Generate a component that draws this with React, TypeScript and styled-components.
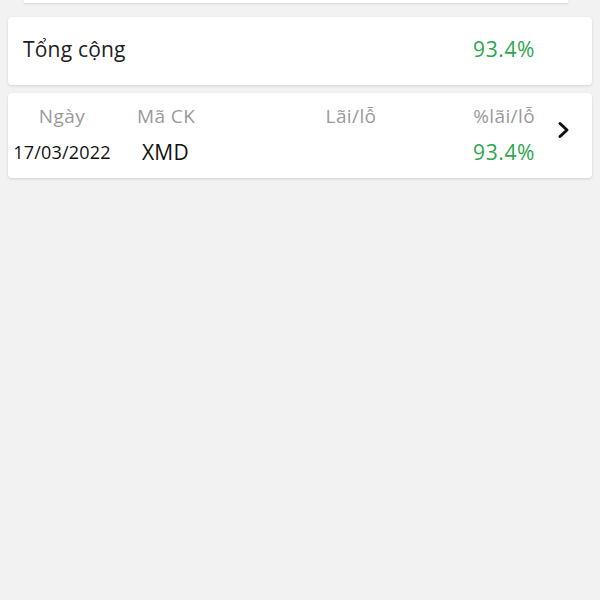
import React from "react";
import styled, { createGlobalStyle } from "styled-components";

const Global = createGlobalStyle`
  html, body { margin: 0; padding: 0; background: #f2f2f2; }
  body { font-family: "Open Sans", "Noto Sans", sans-serif; }
`;

const Page = styled.div`
  width: 600px;
  height: 600px;
  background: #f2f2f2;
  display: flex;
  flex-direction: column;
  overflow: hidden;
`;

const TopStub = styled.div`
  height: 3px;
  margin: 0 32px 0 24px;
  background: #fff;
  box-shadow: 0 1px 2px rgba(0, 0, 0, 0.12);
`;

const Card = styled.div<{ $mt: number }>`
  margin: ${(p) => p.$mt}px 8px 0 8px;
  background: #fff;
  border-radius: 4px;
  box-shadow: 0 1px 3px rgba(0, 0, 0, 0.14);
`;

const TotalRow = styled.div`
  height: 68px;
  display: flex;
  align-items: center;
  justify-content: space-between;
  padding: 0 57px 4px 15px;
  box-sizing: border-box;
`;

const TotalLabel = styled.span`
  font-size: 21px;
  letter-spacing: 0.2px;
  color: #222;
`;

const Green = styled.span<{ $size: number }>`
  font-size: ${(p) => p.$size}px;
  letter-spacing: 0.6px;
  color: #2ea64f;
`;

const Grid = styled.div`
  display: grid;
  grid-template-columns: 100px 188px 102px 133px 1fr;
  grid-template-rows: 24px 28px;
  row-gap: 10px;
  padding: 11px 0 12px 4px;
  align-items: center;
`;

const Head = styled.div<{ $align: string; $pl?: number }>`
  font-size: 19px;
  letter-spacing: 0.4px;
  color: #9a9a9a;
  text-align: ${(p) => p.$align};
  padding-left: ${(p) => p.$pl ?? 0}px;
  white-space: nowrap;
`;

const Cell = styled.div<{ $align: string; $pl?: number; $size: number }>`
  font-size: ${(p) => p.$size}px;
  letter-spacing: 0.2px;
  color: #111;
  text-align: ${(p) => p.$align};
  padding-left: ${(p) => p.$pl ?? 0}px;
  white-space: nowrap;
`;

const ChevronCell = styled.div`
  grid-column: 5;
  grid-row: 1 / span 2;
  display: flex;
  justify-content: center;
  align-items: center;
  padding-bottom: 10px;
`;

const Chevron = () => (
  <svg width="14" height="18" viewBox="0 0 14 18">
    <path d="M3 2.5 L10 9 L3 15.5" fill="none" stroke="#111" strokeWidth="3" strokeLinecap="round" strokeLinejoin="round" />
  </svg>
);

export default function App() {
  return (
    <Page>
      <Global />
      <TopStub />
      <Card $mt={14}>
        <TotalRow>
          <TotalLabel>Tổng cộng</TotalLabel>
          <Green $size={21}>93.4%</Green>
        </TotalRow>
      </Card>
      <Card $mt={8}>
        <Grid>
          <Head $align="center">Ngày</Head>
          <Head $align="left" $pl={25}>Mã CK</Head>
          <Head $align="center">Lãi/lỗ</Head>
          <Head $align="right">%lãi/lỗ</Head>
          <ChevronCell>
            <Chevron />
          </ChevronCell>
          <Cell $align="center" $size={18}>17/03/2022</Cell>
          <Cell $align="left" $pl={30} $size={21}>XMD</Cell>
          <Cell $align="center" $size={18}></Cell>
          <Cell $align="right" $size={21}>
            <Green $size={21}>93.4%</Green>
          </Cell>
        </Grid>
      </Card>
    </Page>
  );
}
